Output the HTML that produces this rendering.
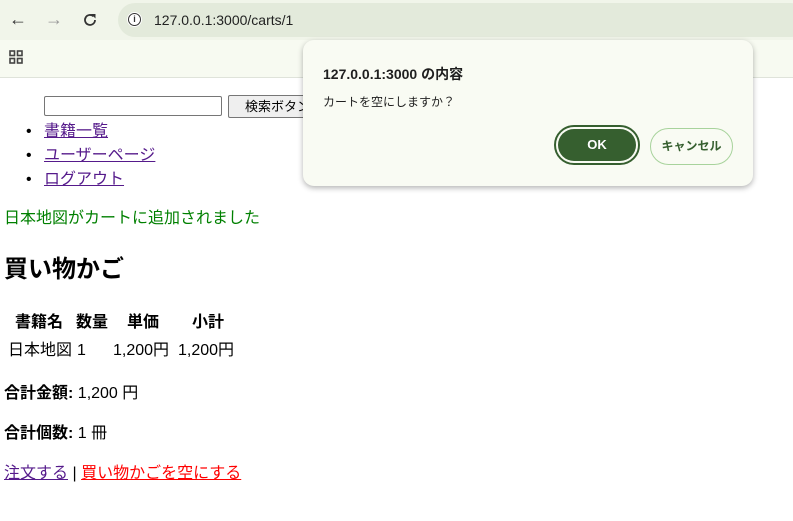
<!DOCTYPE html>
<html><head><meta charset="utf-8"><style>
body{margin:0;width:793px;height:521px;overflow:hidden;background:#fff;font-family:"Liberation Sans","Noto Sans CJK JP",sans-serif;font-size:16px;color:#000;position:relative}
.a{position:absolute;white-space:nowrap;line-height:20px}
a{color:#551a8b}
.top{position:absolute;left:0;top:0;width:793px;height:40px;background:#f1f5ea}
.bm{position:absolute;left:0;top:40px;width:793px;height:37px;background:#f7faf1;border-bottom:1px solid #dfe3da}
.url{position:absolute;left:118px;top:3px;width:690px;height:34px;border-radius:17px;background:#e3eadb}
.dlg{position:absolute;left:303px;top:40px;width:450px;height:146px;background:#f9fbf3;border-radius:11px;box-shadow:0 2px 6px rgba(0,0,0,.3)}
b{font-weight:bold}
</style></head><body>
<div class="top"></div>
<div class="url"></div>
<div class="a" style="left:9px;top:9px;font-size:18px;color:#333">&#8592;</div>
<div class="a" style="left:45px;top:9px;font-size:18px;color:#999">&#8594;</div>
<svg class="a" style="left:82px;top:12px" width="16" height="16" viewBox="0 0 16 16"><path d="M13 8a5 5 0 1 1-1.5-3.6" fill="none" stroke="#333" stroke-width="1.8"/><path d="M9 2h4.5v4.5z" fill="#333"/></svg>
<div style="position:absolute;left:127px;top:12px;width:15px;height:15px;border-radius:50%;background:#fff"></div>
<div style="position:absolute;left:128px;top:13px;width:11px;height:11px;border:1.5px solid #333;border-radius:50%;font-size:9px;line-height:11px;text-align:center;font-weight:bold;color:#333">i</div>
<div class="a" style="left:154px;top:10px;font-size:14px;color:#222">127.0.0.1:3000/carts/1</div>
<div class="bm"></div>
<svg class="a" style="left:9px;top:50px" width="14" height="14"><g fill="none" stroke="#444" stroke-width="1.6"><rect x="1" y="1" width="4.5" height="4.5"/><rect x="8.5" y="1" width="4.5" height="4.5"/><rect x="1" y="8.5" width="4.5" height="4.5"/><rect x="8.5" y="8.5" width="4.5" height="4.5"/></g></svg>

<div style="position:absolute;left:44px;top:96px;width:176px;height:18px;border:1px solid #767676;border-radius:2px"></div>
<div style="position:absolute;left:228px;top:95px;width:100px;height:21px;border:1px solid #767676;border-radius:2px;background:#efefef;font-size:13px;line-height:21px;padding-left:16px;white-space:nowrap;overflow:hidden">検索ボタン</div>
<div class="a" style="left:26px;top:122px">•</div><div class="a" style="left:44px;top:122px"><a href="#">書籍一覧</a></div>
<div class="a" style="left:26px;top:146px">•</div><div class="a" style="left:44px;top:146px"><a href="#">ユーザーページ</a></div>
<div class="a" style="left:26px;top:170px">•</div><div class="a" style="left:44px;top:170px"><a href="#">ログアウト</a></div>
<div class="a" style="left:4px;top:209px;color:#008000">日本地図がカートに追加されました</div>
<div class="a" style="left:4px;top:256px;font-size:24px;line-height:28px;font-weight:bold">買い物かご</div>
<div class="a" style="left:15px;top:313px;font-weight:bold">書籍名</div>
<div class="a" style="left:76px;top:313px;font-weight:bold">数量</div>
<div class="a" style="left:127px;top:313px;font-weight:bold">単価</div>
<div class="a" style="left:192px;top:313px;font-weight:bold">小計</div>
<div class="a" style="left:8px;top:341px">日本地図</div>
<div class="a" style="left:77px;top:341px">1</div>
<div class="a" style="left:113px;top:341px">1,200円</div>
<div class="a" style="left:178px;top:341px">1,200円</div>
<div class="a" style="left:4px;top:384px"><b>合計金額:</b> 1,200 円</div>
<div class="a" style="left:4px;top:424px"><b>合計個数:</b> 1 冊</div>
<div class="a" style="left:4px;top:464px"><a href="#">注文する</a> | <a href="#" style="color:#f00">買い物かごを空にする</a></div>

<div class="dlg">
<div class="a" style="left:20px;top:24px;font-size:14px;font-weight:bold;color:#1f1f1f">127.0.0.1:3000 の内容</div>
<div class="a" style="left:20px;top:52px;font-size:12px;color:#1f1f1f">カートを空にしますか？</div>
<div style="position:absolute;left:251px;top:85px;width:86px;height:40px;border:2px solid #365f2f;border-radius:22px;box-sizing:border-box;padding:2px"><div style="background:#365f2f;border-radius:18px;height:32px;color:#fff;font-size:13px;font-weight:bold;text-align:center;line-height:32px">OK</div></div>
<div style="position:absolute;left:347px;top:88px;width:83px;height:37px;border:1px solid #a8d39c;border-radius:19px;box-sizing:border-box;text-align:center;line-height:35px;font-size:12px;font-weight:bold;color:#365f2f">キャンセル</div>
</div>
</body></html>
